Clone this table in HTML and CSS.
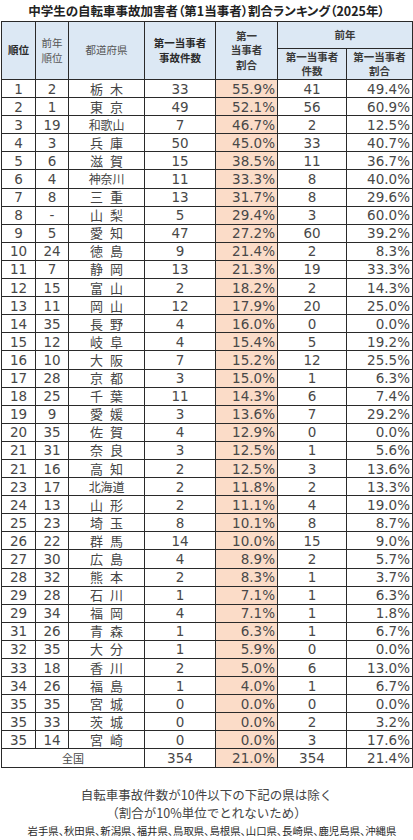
FILE: index.html
```html
<!DOCTYPE html>
<html lang="ja">
<head>
<meta charset="utf-8">
<title>中学生の自転車事故加害者割合ランキング</title>
<link rel="stylesheet" href="styles.css">
</head>
<body>
<h1 class="title">中学生の自転車事故加害者（第1当事者）割合ランキング（2025年）</h1>
<table class="rank">
<colgroup>
<col class="c-rank"><col class="c-prev"><col class="c-pref"><col class="c-cnt"><col class="c-pct"><col class="c-pcnt"><col class="c-ppct">
</colgroup>
<thead>
<tr class="h1">
<th rowspan="2" class="strong">順位</th>
<th rowspan="2" class="soft">前年<br>順位</th>
<th rowspan="2" class="soft">都道府県</th>
<th rowspan="2" class="strong">第一当事者<br>事故件数</th>
<th rowspan="2">第一<br>当事者<br>割合</th>
<th colspan="2">前年</th>
</tr>
<tr class="h2">
<th>第一当事者<br>件数</th>
<th>第一当事者<br>割合</th>
</tr>
</thead>
<tbody>
<tr><td>1</td><td>2</td><td class="pref"><span class="p2">栃木</span></td><td>33</td><td class="pct hi">55.9%</td><td>41</td><td class="pct">49.4%</td></tr>
<tr><td>2</td><td>1</td><td class="pref"><span class="p2">東京</span></td><td>49</td><td class="pct hi">52.1%</td><td>56</td><td class="pct">60.9%</td></tr>
<tr><td>3</td><td>19</td><td class="pref"><span class="p3">和歌山</span></td><td>7</td><td class="pct hi">46.7%</td><td>2</td><td class="pct">12.5%</td></tr>
<tr><td>4</td><td>3</td><td class="pref"><span class="p2">兵庫</span></td><td>50</td><td class="pct hi">45.0%</td><td>33</td><td class="pct">40.7%</td></tr>
<tr><td>5</td><td>6</td><td class="pref"><span class="p2">滋賀</span></td><td>15</td><td class="pct hi">38.5%</td><td>11</td><td class="pct">36.7%</td></tr>
<tr><td>6</td><td>4</td><td class="pref"><span class="p3">神奈川</span></td><td>11</td><td class="pct hi">33.3%</td><td>8</td><td class="pct">40.0%</td></tr>
<tr><td>7</td><td>8</td><td class="pref"><span class="p2">三重</span></td><td>13</td><td class="pct hi">31.7%</td><td>8</td><td class="pct">29.6%</td></tr>
<tr><td>8</td><td>-</td><td class="pref"><span class="p2">山梨</span></td><td>5</td><td class="pct hi">29.4%</td><td>3</td><td class="pct">60.0%</td></tr>
<tr><td>9</td><td>5</td><td class="pref"><span class="p2">愛知</span></td><td>47</td><td class="pct hi">27.2%</td><td>60</td><td class="pct">39.2%</td></tr>
<tr><td>10</td><td>24</td><td class="pref"><span class="p2">徳島</span></td><td>9</td><td class="pct hi">21.4%</td><td>2</td><td class="pct">8.3%</td></tr>
<tr><td>11</td><td>7</td><td class="pref"><span class="p2">静岡</span></td><td>13</td><td class="pct hi">21.3%</td><td>19</td><td class="pct">33.3%</td></tr>
<tr><td>12</td><td>15</td><td class="pref"><span class="p2">富山</span></td><td>2</td><td class="pct hi">18.2%</td><td>2</td><td class="pct">14.3%</td></tr>
<tr><td>13</td><td>11</td><td class="pref"><span class="p2">岡山</span></td><td>12</td><td class="pct hi">17.9%</td><td>20</td><td class="pct">25.0%</td></tr>
<tr><td>14</td><td>35</td><td class="pref"><span class="p2">長野</span></td><td>4</td><td class="pct hi">16.0%</td><td>0</td><td class="pct">0.0%</td></tr>
<tr><td>15</td><td>12</td><td class="pref"><span class="p2">岐阜</span></td><td>4</td><td class="pct hi">15.4%</td><td>5</td><td class="pct">19.2%</td></tr>
<tr><td>16</td><td>10</td><td class="pref"><span class="p2">大阪</span></td><td>7</td><td class="pct hi">15.2%</td><td>12</td><td class="pct">25.5%</td></tr>
<tr><td>17</td><td>28</td><td class="pref"><span class="p2">京都</span></td><td>3</td><td class="pct hi">15.0%</td><td>1</td><td class="pct">6.3%</td></tr>
<tr><td>18</td><td>25</td><td class="pref"><span class="p2">千葉</span></td><td>11</td><td class="pct hi">14.3%</td><td>6</td><td class="pct">7.4%</td></tr>
<tr><td>19</td><td>9</td><td class="pref"><span class="p2">愛媛</span></td><td>3</td><td class="pct hi">13.6%</td><td>7</td><td class="pct">29.2%</td></tr>
<tr><td>20</td><td>35</td><td class="pref"><span class="p2">佐賀</span></td><td>4</td><td class="pct hi">12.9%</td><td>0</td><td class="pct">0.0%</td></tr>
<tr><td>21</td><td>31</td><td class="pref"><span class="p2">奈良</span></td><td>3</td><td class="pct hi">12.5%</td><td>1</td><td class="pct">5.6%</td></tr>
<tr><td>21</td><td>16</td><td class="pref"><span class="p2">高知</span></td><td>2</td><td class="pct hi">12.5%</td><td>3</td><td class="pct">13.6%</td></tr>
<tr><td>23</td><td>17</td><td class="pref"><span class="p3">北海道</span></td><td>2</td><td class="pct hi">11.8%</td><td>2</td><td class="pct">13.3%</td></tr>
<tr><td>24</td><td>13</td><td class="pref"><span class="p2">山形</span></td><td>2</td><td class="pct hi">11.1%</td><td>4</td><td class="pct">19.0%</td></tr>
<tr><td>25</td><td>23</td><td class="pref"><span class="p2">埼玉</span></td><td>8</td><td class="pct hi">10.1%</td><td>8</td><td class="pct">8.7%</td></tr>
<tr><td>26</td><td>22</td><td class="pref"><span class="p2">群馬</span></td><td>14</td><td class="pct hi">10.0%</td><td>15</td><td class="pct">9.0%</td></tr>
<tr><td>27</td><td>30</td><td class="pref"><span class="p2">広島</span></td><td>4</td><td class="pct hi">8.9%</td><td>2</td><td class="pct">5.7%</td></tr>
<tr><td>28</td><td>32</td><td class="pref"><span class="p2">熊本</span></td><td>2</td><td class="pct hi">8.3%</td><td>1</td><td class="pct">3.7%</td></tr>
<tr><td>29</td><td>28</td><td class="pref"><span class="p2">石川</span></td><td>1</td><td class="pct hi">7.1%</td><td>1</td><td class="pct">6.3%</td></tr>
<tr><td>29</td><td>34</td><td class="pref"><span class="p2">福岡</span></td><td>4</td><td class="pct hi">7.1%</td><td>1</td><td class="pct">1.8%</td></tr>
<tr><td>31</td><td>26</td><td class="pref"><span class="p2">青森</span></td><td>1</td><td class="pct hi">6.3%</td><td>1</td><td class="pct">6.7%</td></tr>
<tr><td>32</td><td>35</td><td class="pref"><span class="p2">大分</span></td><td>1</td><td class="pct hi">5.9%</td><td>0</td><td class="pct">0.0%</td></tr>
<tr><td>33</td><td>18</td><td class="pref"><span class="p2">香川</span></td><td>2</td><td class="pct hi">5.0%</td><td>6</td><td class="pct">13.0%</td></tr>
<tr><td>34</td><td>26</td><td class="pref"><span class="p2">福島</span></td><td>1</td><td class="pct hi">4.0%</td><td>1</td><td class="pct">6.7%</td></tr>
<tr><td>35</td><td>35</td><td class="pref"><span class="p2">宮城</span></td><td>0</td><td class="pct hi">0.0%</td><td>0</td><td class="pct">0.0%</td></tr>
<tr><td>35</td><td>33</td><td class="pref"><span class="p2">茨城</span></td><td>0</td><td class="pct hi">0.0%</td><td>2</td><td class="pct">3.2%</td></tr>
<tr><td>35</td><td>14</td><td class="pref"><span class="p2">宮崎</span></td><td>0</td><td class="pct hi">0.0%</td><td>3</td><td class="pct">17.6%</td></tr>
<tr class="total"><td colspan="3" class="label">全国</td><td>354</td><td class="pct hi">21.0%</td><td>354</td><td class="pct">21.4%</td></tr>
</tbody>
</table>
<div class="note">
<p>自転車事故件数が10件以下の下記の県は除く</p>
<p>（割合が10%単位でとれないため）</p>
<p class="list">岩手県、秋田県、新潟県、福井県、鳥取県、島根県、山口県、長崎県、鹿児島県、沖縄県</p>
</div>
</body>
</html>
```
FILE: styles.css
```css
html, body {
  margin: 0;
  padding: 0;
  background: #ffffff;
}
body {
  width: 413px;
  font-family: "Noto Sans CJK JP", sans-serif;
  color: #444444;
}
.title {
  margin: 0;
  padding-top: 1px;
  height: 20px;
  line-height: 20px;
  font-size: 12.5px;
  font-weight: 700;
  color: #222222;
  text-align: center;
  white-space: nowrap;
  font-feature-settings: "palt";
}
.rank {
  border-collapse: collapse;
  table-layout: fixed;
  margin-left: 1px;
  width: 411px;
  border: 1.5px solid #222222;
}
.c-rank { width: 34px; }
.c-prev { width: 33px; }
.c-pref { width: 76px; }
.c-cnt { width: 71px; }
.c-pct { width: 62px; }
.c-pcnt { width: 69px; }
.c-ppct { width: 66px; }

.rank th {
  background: #dce8f4;
  border: 1px solid #2a2a2a;
  padding: 0;
  font-size: 10.5px;
  line-height: 14.5px;
  font-weight: 700;
  color: #3a3a3a;
  text-align: center;
  vertical-align: middle;
  white-space: nowrap;
}
.rank th.strong { color: #2a2a2a; }
.rank th.soft { font-weight: 400; color: #555555; }
.rank tr.h1 { height: 27px; }
.rank tr.h2 { height: 31px; }

.rank td {
  border: 1px solid #2a2a2a;
  padding: 0;
  height: 17px;
  font-family: "DejaVu Sans", "Noto Sans CJK JP", sans-serif;
  font-size: 13.5px;
  line-height: 16px;
  color: #484848;
  text-align: center;
  vertical-align: middle;
  white-space: nowrap;
  overflow: hidden;
}
.rank tbody tr { height: 18.1px; }
.rank td.pct { text-align: right; padding-right: 2px; }
.rank td.hi { background: #fbdcc8; }
.rank td.pref {
  font-family: "Noto Sans CJK JP", sans-serif;
  font-size: 13px;
  color: #454545;
}
.p2 {
  letter-spacing: 7px;
  margin-right: -7px;
}
.p3 {
  font-size: 12px;
  letter-spacing: -0.2px;
}
.rank tr.total td { border-top: 1.5px solid #222222; }
.rank td.label {
  font-family: "Noto Sans CJK JP", sans-serif;
  font-size: 11px;
}

.note {
  margin-top: 18px;
  text-align: center;
}
.note p {
  margin: 0;
  font-size: 12.5px;
  line-height: 18px;
  color: #444444;
  white-space: nowrap;
}
.note p.list {
  font-size: 10.4px;
  color: #2a2a2a;
  font-feature-settings: "palt";
  padding-left: 11px;
}
```
